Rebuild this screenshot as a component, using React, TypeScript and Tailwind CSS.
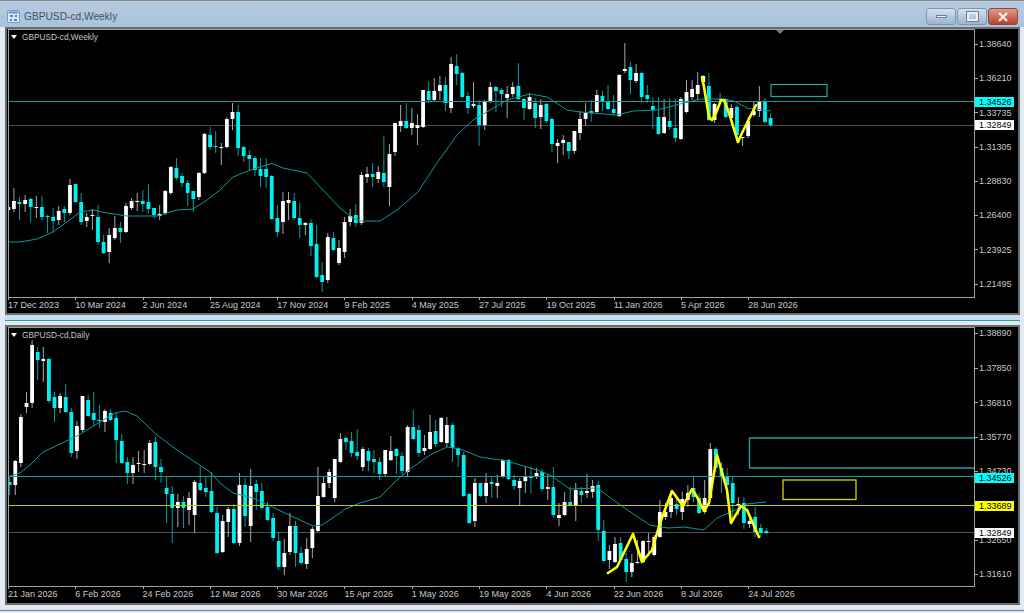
type Candle = [number, number, number, number, number];
type Pt = [number, number];

// [white?, high, bodyTop, bodyBottom, low] in page pixels
const weeklyCandles: Candle[] = [
  [1,198,207,210,218],[1,188,201,209,212],[0,197,202,204,220],[1,195,200,204,212],[0,198,199,207,222],[1,196,207,208,218],[0,196,207,217,220],[0,215,216,217,233],[0,208,217,221,232],[1,206,211,220,225],
  [0,206,209,213,222],[1,179,185,213,215],[0,184,184,202,203],[0,193,202,222,225],[1,213,217,221,227],[1,209,215,216,230],[0,205,217,242,245],[0,235,242,253,254],[1,228,235,252,263],[1,216,228,238,240],
  [0,222,228,232,243],[1,203,206,232,233],[1,198,201,208,210],[1,193,201,201,211],[0,190,201,204,212],[0,184,202,209,213],[0,208,208,215,218],[1,205,214,216,220],[1,190,191,213,215],[1,166,167,193,195],
  [0,158,168,178,180],[0,173,176,183,187],[0,180,183,193,206],[0,191,191,199,212],[1,172,173,197,200],[1,133,134,173,174],[0,127,135,147,150],[0,131,146,147,153],[1,143,147,148,165],[1,117,119,147,148],
  [1,103,112,119,130],[0,105,112,148,156],[0,146,147,156,162],[0,150,155,159,170],[0,156,158,170,176],[0,158,169,176,187],[0,158,169,177,188],[0,175,176,219,220],[0,205,218,232,237],[1,192,201,222,234],
  [1,192,200,203,220],[0,193,201,218,220],[0,203,218,225,238],[1,222,223,225,235],[0,219,223,246,256],[0,225,244,277,278],[0,262,275,282,292],[1,233,237,280,283],[0,232,238,250,251],[1,240,248,263,265],
  [1,217,222,252,258],[1,209,216,222,226],[0,204,215,223,227],[1,172,175,223,225],[1,167,174,177,183],[0,163,174,177,187],[1,166,172,179,183],[0,136,173,182,187],[1,144,154,187,206],[1,123,123,152,156],
  [1,105,121,126,132],[0,103,121,128,129],[1,108,123,128,135],[1,114,125,128,145],[1,90,90,127,128],[0,82,91,100,103],[1,78,91,100,101],[1,76,85,91,100],[0,77,85,103,111],[1,57,64,108,113],
  [0,54,66,74,85],[0,72,73,97,98],[0,92,96,108,114],[1,82,104,106,108],[0,100,105,125,146],[1,100,102,125,130],[1,82,87,102,103],[0,86,87,91,112],[0,88,90,94,107],[1,86,94,98,118],
  [1,82,87,94,97],[0,63,86,99,100],[0,98,99,108,120],[1,93,97,109,110],[0,98,103,118,128],[1,99,105,117,129],[0,103,104,121,123],[0,118,119,144,152],[1,139,143,146,163],[1,135,140,143,155],
  [0,142,142,151,159],[1,131,131,151,154],[1,111,119,133,140],[1,103,113,119,126],[0,100,111,113,122],[1,90,95,112,113],[0,91,96,101,111],[0,85,101,109,110],[0,95,109,113,116],[1,74,75,116,117],
  [1,43,69,71,73],[0,62,67,80,94],[1,64,73,81,83],[0,72,73,97,103],[0,85,95,99,103],[0,97,106,110,129],[0,97,117,134,135],[1,99,117,133,134],[0,98,121,127,130],[0,98,128,138,142],
  [1,97,99,139,140],[1,80,92,112,113],[1,80,89,97,100],[1,72,85,94,100],[1,75,76,82,83],[0,73,86,120,121],[1,103,104,120,123],[0,93,99,100,103],[0,98,99,117,118],[1,104,108,118,125],
  [0,105,107,135,142],[1,137,137,138,146],[1,117,121,136,138],[1,102,111,115,117],[1,86,102,111,117],[0,98,101,122,123],[0,113,118,125,127],
];

const dailyCandles: Candle[] = [
  [0,477,482,485,495],[1,460,461,485,495],[1,414,417,463,467],[1,392,403,407,413],[1,340,345,403,408],[0,347,352,360,380],[1,347,359,361,382],[0,358,359,401,403],[0,392,397,408,422],[1,393,396,408,413],
  [0,384,397,412,413],[0,408,412,453,457],[1,421,426,451,459],[1,396,396,430,432],[0,395,400,416,417],[0,392,413,420,426],[0,405,420,421,428],[1,409,411,422,432],[0,409,413,420,421],[0,413,418,440,463],
  [0,434,441,463,464],[0,457,462,473,484],[1,457,465,473,484],[1,451,463,464,472],[1,450,464,465,473],[1,440,443,464,465],[0,437,442,467,480],[0,459,467,472,483],[0,477,488,494,523],[0,486,494,508,543],
  [1,494,502,508,527],[0,496,502,508,528],[1,492,498,510,525],[1,480,482,515,533],[0,467,483,490,491],[0,477,488,492,497],[0,472,491,512,513],[0,507,513,553,554],[1,515,521,552,553],[1,507,509,522,537],
  [0,504,509,543,544],[1,473,485,543,546],[0,478,485,516,527],[1,469,486,526,542],[0,480,484,492,510],[0,483,491,508,510],[0,502,507,520,521],[0,513,518,538,541],[0,532,541,567,570],[1,539,553,567,575],
  [1,513,526,552,555],[0,521,526,553,567],[0,547,553,563,565],[1,538,549,564,569],[1,527,529,548,558],[1,467,496,531,532],[1,476,483,497,498],[1,469,472,483,488],[1,459,459,498,502],[1,433,439,462,463],
  [0,436,438,442,450],[0,432,441,453,457],[0,429,452,456,460],[1,447,449,467,471],[0,448,451,461,471],[0,450,459,462,473],[0,457,462,474,480],[1,450,450,474,477],[1,436,451,460,461],[0,448,449,456,474],
  [0,452,456,471,475],[1,425,427,472,477],[0,410,427,439,440],[0,425,430,453,457],[1,435,448,451,455],[1,415,432,449,450],[0,420,431,444,447],[1,417,418,442,443],[1,417,425,443,447],[0,423,425,448,462],
  [0,447,448,455,467],[0,452,455,496,497],[0,493,494,523,524],[1,478,483,521,527],[0,483,483,496,497],[1,473,483,496,503],[0,477,482,484,498],[1,475,483,486,498],[1,459,460,476,478],[0,459,460,479,480],
  [0,475,480,486,490],[1,478,481,488,505],[1,467,477,481,493],[0,467,476,478,493],[1,468,473,477,479],[0,469,472,489,491],[1,474,487,489,500],[0,467,487,515,518],[1,503,515,518,526],[1,492,502,515,516],
  [0,487,502,505,506],[1,483,490,505,521],[0,487,491,495,503],[1,474,491,493,498],[1,480,486,492,498],[0,481,485,530,541],[0,520,531,561,563],[1,545,551,560,569],[1,537,544,562,563],[0,537,543,560,561],
  [0,553,559,572,582],[1,554,563,572,577],[1,540,562,563,564],[1,540,541,562,563],[1,533,541,542,556],[1,535,537,555,556],[1,500,512,537,538],[1,503,512,517,520],[1,495,498,512,518],[0,497,504,509,515],
  [1,492,499,512,520],[1,485,493,500,507],[0,477,488,497,502],[0,493,498,513,514],[1,480,498,512,514],[1,443,449,498,500],[0,447,449,468,472],[0,462,468,476,493],[0,468,477,485,500],[0,476,483,503,518],
  [1,497,504,506,515],[0,497,503,523,529],[1,513,521,524,528],[0,507,517,532,537],[0,524,528,533,537],[0,528,531,533,534],
];

const weeklyMa: Pt[] = [[8,242],[20,242],[37,239],[53,232],[67,222],[80,212],[93,210],[107,213],[127,216],[157,216],[177,210],[193,209],[207,200],[220,190],[233,177],[253,169],[272,163.5],[283,168],[307,173],[323,190],[340,208],[351,217],[360,221],[380,221],[397,210],[418,192],[437,163],[457,135],[473,120],[490,110],[507,100],[530,94],[547,97],[567,110],[580,112],[617,115],[633,111],[657,110],[684,103],[701,99],[721,99],[734,101],[747,108],[771,111]];
const weeklyYellow: Pt[] = [[702,77],[704,87],[709,117],[712,120],[716,113],[721,100],[724,100],[729,113],[738,142],[742,133],[756,105]];
const dailyMa: Pt[] = [[10,476],[20,473],[30,465],[43,452],[60,444],[77,436],[100,422],[115,413],[125,411],[137,416],[157,435],[177,450],[210,472],[220,483],[233,493],[253,498],[287,514],[313,526],[322,525],[340,513],[345,509],[360,503],[380,497],[397,480],[410,469],[430,455],[447,447],[460,449],[480,457],[507,461],[537,470],[550,475],[570,489],[597,488],[623,507],[650,525],[668,528],[684,527],[704,530],[717,518],[731,512],[747,504],[766,502]];
const dailyYellow: Pt[] = [[608,573],[617,567],[633,534],[642,562],[652,550],[660,523],[672,491],[683,506],[692,489],[697,497],[704,511],[709,503],[717,455],[727,490],[731,523],[741,506],[747,510],[759,537]];

type Price = { y: number; text: string; bg?: string };

const weeklyPrices: Price[] = [
  { y: 44, text: "1.38640" }, { y: 78, text: "1.36210" }, { y: 112.5, text: "1.33735" }, { y: 147, text: "1.31305" }, { y: 181, text: "1.28830" }, { y: 215, text: "1.26400" }, { y: 249.5, text: "1.23925" }, { y: 284, text: "1.21495" },
  { y: 101.5, text: "1.34526", bg: "bg-[#00ffff]" }, { y: 125, text: "1.32849", bg: "bg-white" },
];
const dailyPrices: Price[] = [
  { y: 333, text: "1.38890" }, { y: 368, text: "1.37850" }, { y: 402.5, text: "1.36810" }, { y: 437, text: "1.35770" }, { y: 471, text: "1.34730" }, { y: 540, text: "1.32650" }, { y: 574, text: "1.31610" },
  { y: 477.5, text: "1.34526", bg: "bg-[#00ffff]" }, { y: 506, text: "1.33689", bg: "bg-[#ffff00]" }, { y: 532.5, text: "1.32849", bg: "bg-white" },
];

const weeklyDates = ["17 Dec 2023", "10 Mar 2024", "2 Jun 2024", "25 Aug 2024", "17 Nov 2024", "9 Feb 2025", "4 May 2025", "27 Jul 2025", "19 Oct 2025", "11 Jan 2026", "5 Apr 2026", "28 Jun 2026"];
const dailyDates = ["21 Jan 2026", "6 Feb 2026", "24 Feb 2026", "12 Mar 2026", "30 Mar 2026", "15 Apr 2026", "1 May 2026", "19 May 2026", "4 Jun 2026", "22 Jun 2026", "8 Jul 2026", "24 Jul 2026"];

const toPoints = (pts: Pt[]) => pts.map((p) => p.join(",")).join(" ");

function Candles({ data, start }: { data: Candle[]; start: number }) {
  return (
    <>
      {data.map(([white, hi, top, bot, lo], i) => {
        const x = start + i * 5.605;
        return (
          <g key={i}>
            <rect x={x - 0.5} y={hi} width={1} height={lo - hi} fill={white ? "#a8a8a8" : "#0b9a9a"} />
            <rect x={x - 1.9} y={top} width={3.8} height={Math.max(bot - top, 1)} fill={white ? "#ffffff" : "#00f0f0"} />
          </g>
        );
      })}
    </>
  );
}

function TimeAxis({ dates }: { dates: string[] }) {
  return (
    <div className="flex pl-px">
      {dates.map((d) => (
        <div key={d} className="w-[67.3px] shrink-0 text-[9px] leading-[11px] text-[#c8c8c8] whitespace-nowrap">
          <div className="w-px h-[2px] bg-[#b0b0b0]" />
          {d}
        </div>
      ))}
    </div>
  );
}

function PriceAxis({ prices, top }: { prices: Price[]; top: number }) {
  return (
    <div className="relative w-[43px] shrink-0">
      {prices.map((p) => (
        <div key={p.text} className="absolute left-0 w-[39px] h-[10px] flex items-center" style={{ top: p.y - top - 5 }}>
          {!p.bg && <div className="w-[3px] h-px bg-[#b0b0b0] shrink-0" />}
          <span className={p.bg ? `${p.bg} w-full pl-[4px] text-black text-[9px] leading-[10px]` : "pl-px text-[#c8c8c8] text-[9px] leading-[10px]"}>
            {p.text}
          </span>
        </div>
      ))}
    </div>
  );
}

function ChartTitle({ title }: { title: string }) {
  return (
    <div className="absolute left-[2px] top-[1px] flex items-center gap-[5px] text-[8.3px] leading-[12px] text-[#c4c4c4]">
      <div className="w-0 h-0 border-l-[3px] border-r-[3px] border-t-[4px] border-l-transparent border-r-transparent border-t-white" />
      {title}
    </div>
  );
}

function WeeklyChart() {
  return (
    <div className="flex-none h-[288px] border-2 border-[#6b6b6b] bg-black flex flex-col">
      <div className="flex pl-px">
        <div className="relative w-[967px] h-[269px] border border-[#a0a0a0]">
          <ChartTitle title="GBPUSD-cd,Weekly" />
          <svg width={965} height={267} viewBox="9 30 965 267" className="block">
            <line x1={9} x2={974} y1={125.5} y2={125.5} stroke="#505050" />
            <Candles data={weeklyCandles} start={8.3} />
            <polyline points={toPoints(weeklyMa)} fill="none" stroke="#0a9a9a" strokeWidth={1} />
            <line x1={9} x2={974} y1={101.5} y2={101.5} stroke="#129c9c" />
            <polyline points={toPoints(weeklyYellow)} fill="none" stroke="#ffff00" strokeWidth={2.6} strokeLinejoin="round" strokeLinecap="round" />
            <rect x={771} y={84.5} width={56} height={12} fill="none" stroke="#27a5a5" strokeWidth={1.2} />
            <polygon points="776,30 784,30 780,34" fill="#6f7f88" />
          </svg>
        </div>
        <PriceAxis prices={weeklyPrices} top={29} />
      </div>
      <TimeAxis dates={weeklyDates} />
    </div>
  );
}

function DailyChart() {
  return (
    <div className="flex-none h-[280px] border-2 border-[#6b6b6b] bg-black flex flex-col">
      <div className="flex pl-px">
        <div className="relative w-[967px] h-[260px] border-l border-r border-b border-t border-[#a0a0a0]">
          <ChartTitle title="GBPUSD-cd,Daily" />
          <svg width={965} height={258} viewBox="9 328 965 258" className="block">
            <line x1={9} x2={974} y1={532.5} y2={532.5} stroke="#4d5258" />
            <Candles data={dailyCandles} start={9.67} />
            <polyline points={toPoints(dailyMa)} fill="none" stroke="#0a9a9a" strokeWidth={1} />
            <line x1={9} x2={974} y1={476.5} y2={476.5} stroke="#129c9c" />
            <line x1={9} x2={974} y1={505.5} y2={505.5} stroke="#c8c800" />
            <polyline points={toPoints(dailyYellow)} fill="none" stroke="#ffff00" strokeWidth={2.6} strokeLinejoin="round" strokeLinecap="round" />
            <path d="M974 438H749.5V468H974" fill="none" stroke="#2a9d9d" strokeWidth={1.3} />
            <rect x={783} y={480} width={73} height={19.5} fill="none" stroke="#d6d600" strokeWidth={1.3} />
          </svg>
        </div>
        <PriceAxis prices={dailyPrices} top={327} />
      </div>
      <TimeAxis dates={dailyDates} />
    </div>
  );
}

function WindowIcon() {
  return (
    <svg width={13} height={13} viewBox="0 0 13 13" className="shrink-0">
      <rect x={0.5} y={0.5} width={12} height={12} rx={1} fill="#dbe9f7" stroke="#6f9ccc" />
      <rect x={1.5} y={1.5} width={10} height={2} fill="#5b93d3" />
      <path d="M3 5h3v2H3zM8 5h2v2H8zM3 9h2v2H3zM7 9h3v2H7z" fill="#4f86c6" />
    </svg>
  );
}

function WindowButtons() {
  return (
    <div className="flex gap-[1px] pt-[7px]">
      <div className="w-[30px] h-[17px] rounded-[3px] border border-[#7f98b2] bg-gradient-to-b from-[#d3e0ec] to-[#9db6cf] flex items-center justify-center">
        <div className="w-[11px] h-[3px] bg-[#f0f4f8] border border-[#6e7f90]" />
      </div>
      <div className="w-[30px] h-[17px] rounded-[3px] border border-[#7f98b2] bg-gradient-to-b from-[#d3e0ec] to-[#9db6cf] flex items-center justify-center">
        <div className="w-[11px] h-[9px] border-2 border-[#e8eef4] outline outline-1 outline-[#6e7f90]" />
      </div>
      <div className="w-[30px] h-[17px] rounded-[3px] border border-[#8a4a40] bg-gradient-to-b from-[#e09a88] to-[#b8402c] flex items-center justify-center">
        <svg width={12} height={10} viewBox="0 0 12 10">
          <path d="M2 1l8 8M10 1L2 9" stroke="#f6eeea" strokeWidth={2.4} />
        </svg>
      </div>
    </div>
  );
}

export default function App() {
  return (
    <div className="w-[1024px] h-[613px] overflow-hidden bg-[#dfeaf5] pl-[5px] pr-[4px] flex flex-col font-['Liberation_Sans',sans-serif] border-t border-[#8a8a8a]">
      <div className="-ml-[5px] -mr-[4px] h-[26px] shrink-0 bg-gradient-to-b from-[#b6cbe0] to-[#a9c3dc] flex items-start justify-between pl-[7px] pr-[6px]">
        <div className="flex items-center gap-[4px] h-[31px] text-[#45525f] text-[10.2px]">
          <WindowIcon />
          GBPUSD-cd,Weekly
        </div>
        <WindowButtons />
      </div>
      <WeeklyChart />
      <div className="shrink-0 h-[5px] bg-[#c6dff0]" />
      <div className="shrink-0 h-px bg-[#2d9aa8]" />
      <div className="shrink-0 h-[4px] bg-[#e2e8ee]" />
      <DailyChart />
      <div className="shrink-0 h-[5px]" />
      <div className="shrink-0 h-px -ml-[5px] -mr-[4px] bg-[#7a7a7a]" />
    </div>
  );
}
